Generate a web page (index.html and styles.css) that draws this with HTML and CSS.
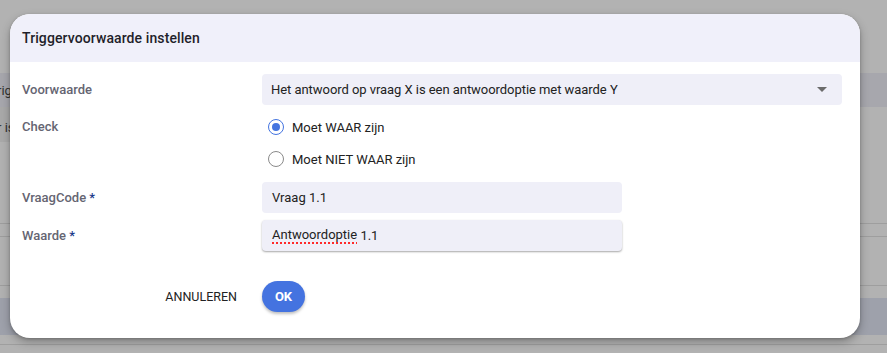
FILE: index.html
```html
<!DOCTYPE html>
<html lang="nl">
<head>
<meta charset="utf-8">
<title>Triggervoorwaarde instellen</title>
<link rel="stylesheet" href="styles.css">
</head>
<body>
<div class="page">
  <div class="bg-row bg-top"></div>
  <div class="bg-row bg-band"><span class="bg-text">rig</span></div>
  <div class="bg-row bg-field"><span class="bg-text">r is</span></div>
  <div class="bg-row bg-plain2"></div>
  <div class="bg-row bg-line"></div>
  <div class="bg-row bg-gap13"></div>
  <div class="bg-row bg-line"></div>
  <div class="bg-row bg-gap48"></div>
  <div class="bg-row bg-line"></div>
  <div class="bg-row bg-gap12"></div>
  <div class="bg-row bg-blue"></div>
  <div class="bg-row bg-gap9"></div>
  <div class="bg-row bg-line"></div>
</div>

<div class="dialog">
  <div class="dialog-header">Triggervoorwaarde instellen</div>
  <div class="dialog-body">
    <div class="form-row">
      <div class="label">Voorwaarde</div>
      <div class="select">
        <span>Het antwoord op vraag X is een antwoordoptie met waarde Y</span>
        <svg class="caret" width="10" height="5" viewBox="0 0 10 5"><path d="M0 0 L10 0 L5 5 Z" fill="#6b6b6b"/></svg>
      </div>
    </div>
    <div class="form-row top">
      <div class="label check-label">Check</div>
      <div class="radios">
        <div class="radio-item">
          <span class="radio checked"></span>
          <span>Moet WAAR zijn</span>
        </div>
        <div class="radio-item">
          <span class="radio"></span>
          <span>Moet NIET WAAR zijn</span>
        </div>
      </div>
    </div>
    <div class="form-row">
      <div class="label">VraagCode <span class="req">*</span></div>
      <div class="input">Vraag 1.1</div>
    </div>
    <div class="form-row">
      <div class="label">Waarde <span class="req">*</span></div>
      <div class="input focused"><span class="spell">Antwoordoptie</span> 1.1</div>
    </div>
    <div class="actions">
      <div class="actions-left">
        <button class="btn-text">ANNULEREN</button>
      </div>
      <button class="btn-ok">OK</button>
    </div>
  </div>
</div>
</body>
</html>
```

FILE: styles.css
```css
html, body {
  margin: 0;
  padding: 0;
}
body {
  width: 887px;
  height: 353px;
  overflow: hidden;
  background: #b2b2b2;
  font-family: Roboto, "Liberation Sans", sans-serif;
  position: relative;
}
.page {
  display: flex;
  flex-direction: column;
}
.bg-row {
  position: relative;
}
.bg-text {
  font-size: 13px;
  color: #333;
  position: relative;
  left: -3px;
}
.bg-top { height: 73px; }
.bg-band {
  height: 34px;
  background: #a7a7ad;
  line-height: 34px;
}
.bg-field {
  height: 35px;
  background: #a9a9a9;
  width: 12px;
  line-height: 40px;
  overflow: hidden;
  white-space: nowrap;
}
.bg-plain2 { height: 81px; }
.bg-line { height: 1px; background: #9e9e9e; }
.bg-gap13 { height: 12px; }
.bg-gap48 { height: 48px; }
.bg-gap12 { height: 12px; }
.bg-blue { height: 37px; background: #9ea1ab; }
.bg-gap9 { height: 9px; }

.dialog {
  position: absolute;
  left: 10px;
  top: 14px;
  width: 850px;
  height: 324px;
  background: #fff;
  border-radius: 20px;
  overflow: hidden;
  box-shadow: 0 4px 10px rgba(0,0,0,0.28), 0 1px 3px rgba(0,0,0,0.2);
  display: flex;
  flex-direction: column;
}
.dialog-header {
  height: 48px;
  background: #f0f0fa;
  display: flex;
  align-items: center;
  padding-left: 12px;
  font-size: 14px;
  font-weight: 500;
  color: #1f1f2a;
  letter-spacing: 0.1px;
}
.dialog-body {
  padding: 12px 18px 0 12px;
  display: flex;
  flex-direction: column;
  gap: 7px;
}
.form-row {
  display: flex;
  align-items: center;
}
.form-row.top {
  align-items: flex-start;
  margin-top: -1px;
}
.label {
  width: 240px;
  flex: none;
  font-size: 13px;
  font-weight: 500;
  color: #656572;
}
.check-label {
  line-height: 32px;
}
.req {
  color: #1a3a8a;
}
.select {
  flex: 1;
  height: 31px;
  background: #efeff8;
  border-radius: 4px;
  display: flex;
  align-items: center;
  justify-content: space-between;
  padding: 0 15px 0 9px;
  font-size: 13px;
  color: #222;
  letter-spacing: -0.05px;
}
.caret { display: block; }
.radios {
  display: flex;
  flex-direction: column;
}
.radio-item {
  height: 32px;
  display: flex;
  align-items: center;
  padding-left: 6px;
  gap: 8px;
  font-size: 13px;
  color: #222;
}
.radio {
  width: 16px;
  height: 16px;
  box-sizing: border-box;
  border: 1.5px solid #8a8a8a;
  border-radius: 50%;
  display: inline-flex;
  align-items: center;
  justify-content: center;
}
.radio.checked {
  border-color: #4474e0;
}
.radio.checked::after {
  content: "";
  width: 8px;
  height: 8px;
  border-radius: 50%;
  background: #4474e0;
}
.input {
  width: 360px;
  height: 31px;
  box-sizing: border-box;
  background: #efeff8;
  border-radius: 4px;
  display: flex;
  align-items: center;
  padding-left: 10px;
  font-size: 13px;
  color: #222;
  white-space: pre;
}
.input.focused {
  box-shadow: 0 1px 2px rgba(0,0,0,0.35);
}
.spell {
  padding-bottom: 2px;
  background-image: linear-gradient(90deg, #ff2a2a 60%, rgba(255,42,42,0) 60%);
  background-repeat: repeat-x;
  background-position: left bottom;
  background-size: 4px 2px;
}
.actions {
  display: flex;
  align-items: center;
  margin-top: 23px;
}
.actions-left {
  width: 240px;
  display: flex;
  justify-content: flex-end;
  padding-right: 25px;
  box-sizing: border-box;
}
.btn-text {
  border: none;
  background: none;
  font-family: inherit;
  font-size: 12.5px;
  color: #222;
  padding: 0;
}
.btn-ok {
  width: 43px;
  height: 31px;
  border: none;
  border-radius: 16px;
  background: #4473e0;
  color: #fff;
  font-family: inherit;
  font-weight: 700;
  font-size: 13px;
  box-shadow: 0 2px 3px rgba(0,0,0,0.25);
  padding: 0;
}
```
